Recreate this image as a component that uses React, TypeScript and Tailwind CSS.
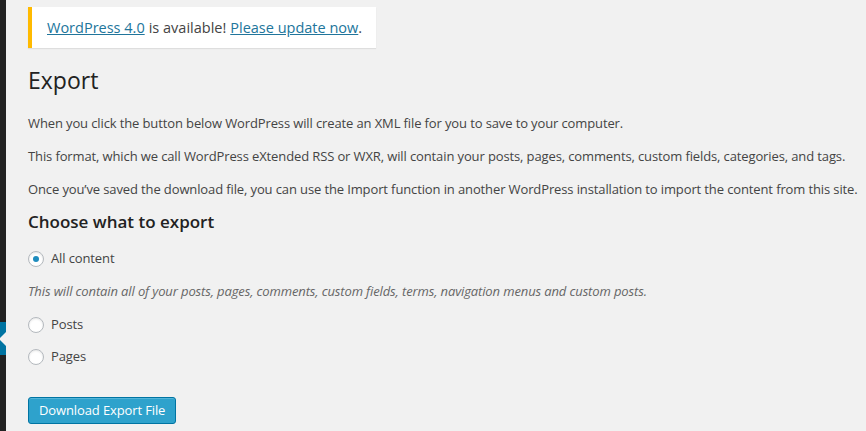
import React from "react";

const options = [
  { id: "all", label: "All content", checked: true },
  { id: "posts", label: "Posts", checked: false },
  { id: "pages", label: "Pages", checked: false },
];

const Radio = ({ checked }: { checked: boolean }) => (
  <span className="flex items-center justify-center w-4 h-4 rounded-full border border-[#b4b9be] bg-white shadow-[inset_0_1px_2px_rgba(0,0,0,0.1)]">
    {checked && <span className="w-[6px] h-[6px] rounded-full bg-[#1e8cbe]" />}
  </span>
);

const App = () => {
  return (
    <div
      className="flex h-[431px] w-[866px] overflow-hidden bg-[#f1f1f1] text-[#444]"
      style={{ fontFamily: '"Open Sans", sans-serif' }}
    >
      {/* admin menu edge */}
      <div className="flex flex-col w-[6px] shrink-0 bg-[#222]">
        <div className="h-[322px]" />
        <div className="relative h-[33px] bg-[#0074a2]">
          <span className="absolute right-0 top-[10px] w-0 h-0 border-y-[7px] border-y-transparent border-r-[7px] border-r-[#f1f1f1]" />
        </div>
      </div>

      <div className="flex flex-col pl-[22px] pt-[7px]">
        <div className="flex items-center w-[348px] h-[41px] bg-white border-l-4 border-[#ffba00] pl-[15px] shadow-[0_1px_1px_rgba(0,0,0,0.08)] text-[14.5px]">
          <a href="#" className="text-[#21759b] underline">WordPress 4.0</a>
          <span className="ml-1">is available!</span>
          <a href="#" className="ml-1 text-[#21759b] underline">Please update now</a>
          <span>.</span>
        </div>

        <h2 className="mt-[18px] text-[23px] leading-[29px] text-[#222]">Export</h2>

        <div className="mt-[19px] flex flex-col gap-[14px] text-[13px] leading-[19px] tracking-[-0.12px]">
          <p>When you click the button below WordPress will create an XML file for you to save to your computer.</p>
          <p>This format, which we call WordPress eXtended RSS or WXR, will contain your posts, pages, comments, custom fields, categories, and tags.</p>
          <p className="whitespace-nowrap">Once you’ve saved the download file, you can use the Import function in another WordPress installation to import the content from this site.</p>
        </div>

        <h3 className="mt-[12px] text-[17px] leading-[22px] font-semibold text-[#222]">Choose what to export</h3>

        <div className="mt-[16px] flex flex-col text-[13px] leading-[19px] tracking-[-0.12px]">
          {options.map((item, index) => (
            <React.Fragment key={item.id}>
              <label className="flex items-center gap-[7px] h-[19px]">
                <Radio checked={item.checked} />
                <span>{item.label}</span>
              </label>
              {index === 0 ? (
                <p className="my-[14px] italic text-[#666]">
                  This will contain all of your posts, pages, comments, custom fields, terms, navigation menus and custom posts.
                </p>
              ) : (
                <div className="h-[13px]" />
              )}
            </React.Fragment>
          ))}
        </div>

        <button className="mt-[18px] self-start h-[27px] px-[10px] rounded-[3px] bg-[#2ea2cc] border border-[#0074a2] text-white text-[13px] tracking-[-0.12px] shadow-[inset_0_1px_0_rgba(120,200,230,0.5)]">
          Download Export File
        </button>
      </div>
    </div>
  );
};

export default App;
